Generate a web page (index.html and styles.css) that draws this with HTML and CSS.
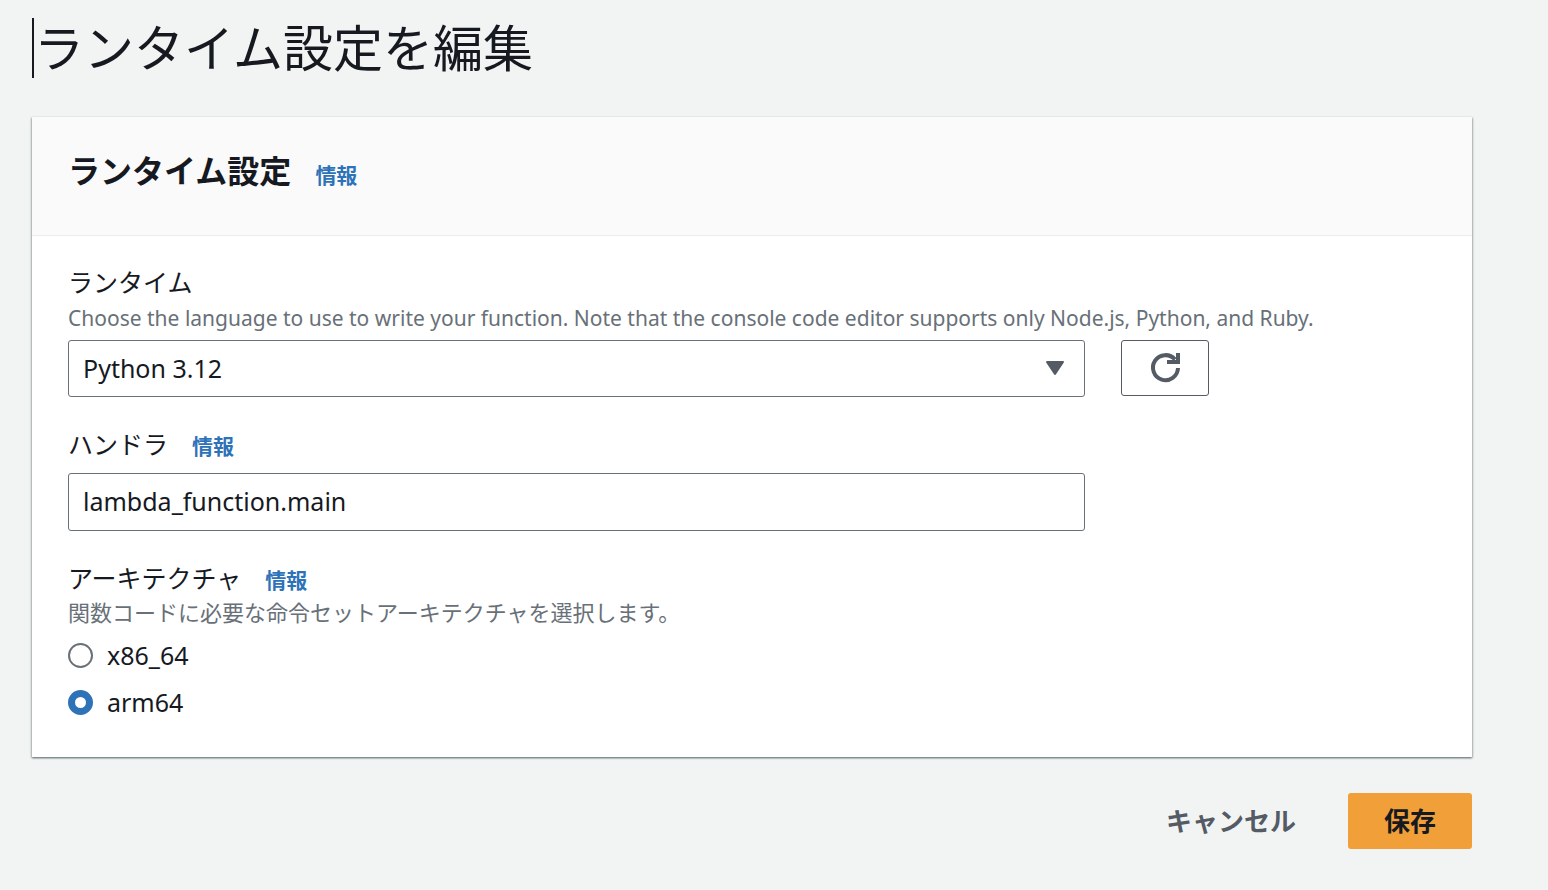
FILE: index.html
```html
<!DOCTYPE html>
<html lang="ja">
<head>
<meta charset="utf-8">
<meta name="viewport" content="width=device-width, initial-scale=1">
<title>ランタイム設定を編集</title>
<link rel="stylesheet" href="styles.css">
</head>
<body>
<main class="page">
  <h1 class="page-title">ランタイム設定を編集</h1>
  <form class="form">
    <section class="card">
      <header class="card-header">
        <h2 class="card-title">ランタイム設定</h2>
        <a class="info" href="#">情報</a>
      </header>
      <div class="card-body">
        <div class="field">
          <div class="label-row"><label class="label" for="runtime">ランタイム</label></div>
          <p class="hint hint-latin">Choose the language to use to write your function. Note that the console code editor supports only Node.js, Python, and Ruby.</p>
          <div class="control-row">
            <div class="select-wrap">
              <select class="control" id="runtime"><option>Python 3.12</option></select>
              <svg class="caret" viewBox="0 0 20 16" aria-hidden="true"><path d="M2 2h16l-8 12z"/></svg>
            </div>
            <button class="refresh" type="button" aria-label="更新">
              <svg viewBox="0 0 32 32" aria-hidden="true"><path d="M29 16A12.5 12.5 0 1 1 26 7.500"/><path d="M29 1V10H18"/></svg>
            </button>
          </div>
        </div>
        <div class="field">
          <div class="label-row"><label class="label" for="handler">ハンドラ</label><a class="info" href="#">情報</a></div>
          <input class="control handler" id="handler" type="text" value="lambda_function.main">
        </div>
        <fieldset class="field">
          <legend class="label-row"><span class="label">アーキテクチャ</span><a class="info" href="#">情報</a></legend>
          <p class="hint">関数コードに必要な命令セットアーキテクチャを選択します。</p>
          <div class="options">
            <label class="option"><input class="radio" type="radio" name="arch">x86_64</label>
            <label class="option"><input class="radio" type="radio" name="arch" checked>arm64</label>
          </div>
        </fieldset>
      </div>
    </section>
    <div class="actions">
      <button class="button" type="button">キャンセル</button>
      <button class="button primary" type="button">保存</button>
    </div>
  </form>
</main>
</body>
</html>
```
FILE: styles.css
```css
* { box-sizing: border-box; }
body {
  margin: 0;
  background: #f2f4f3;
  color: #16191f;
  font-family: "Noto Sans", "Noto Sans CJK JP", sans-serif;
  font-size: 25px;
}
h1, h2, p, fieldset, legend { margin: 0; padding: 0; border: 0; }
.page { padding: 18px 76px 40px 32px; }
.page-title {
  border-left: 2px solid #16191f;
  font-size: 50px;
  line-height: 60px;
  font-weight: 400;
}
.card {
  margin-top: 39px;
  background: #fff;
  box-shadow: 0 1px 2px rgba(0, 28, 36, 0.5), 1px 1px 2px rgba(0, 28, 36, 0.15), -1px 1px 2px rgba(0, 28, 36, 0.15);
}
.card-header {
  display: flex;
  align-items: baseline;
  gap: 24px;
  padding: 32px 36px 42px;
  background: #fafafa;
  border-bottom: 1px solid #eaeded;
}
.card-title { font-size: 32px; line-height: 44px; font-weight: 700; }
.info { color: #2e72b8; font-size: 21px; font-weight: 700; line-height: 32px; text-decoration: none; }
.card-body { display: grid; gap: 31px; padding: 30px 36px 37px; }
.field { min-width: 0; }
.label { line-height: 32px; }
.label-row { display: flex; align-items: baseline; gap: 24px; height: 32px; }
.hint { margin-top: 2px; color: #687078; font-size: 22px; line-height: 32px; }
.hint-latin { margin-top: 4px; font-size: 21px; }
.control-row { display: grid; grid-template-columns: minmax(0, 1017px) 88px; gap: 36px; margin-top: 6px; }
.select-wrap { position: relative; }
.control {
  display: block;
  width: 100%;
  max-width: 1017px;
  height: 57px;
  padding: 0 14px 2px;
  border: 1px solid #687078;
  border-radius: 3px;
  background: #fff;
  color: #16191f;
  font: inherit;
  appearance: none;
}
.handler { height: 58px; margin-top: 13px; }
.caret {
  position: absolute;
  right: 20px;
  top: 20px;
  width: 20px;
  height: 16px;
  fill: #545b64;
  stroke: #545b64;
  stroke-width: 2;
  stroke-linejoin: round;
}
.refresh {
  display: grid;
  place-items: center;
  height: 56px;
  padding: 0;
  border: 1px solid #545b64;
  border-radius: 3px;
  background: #fff;
}
.refresh svg { width: 32px; height: 32px; fill: none; stroke: #545b64; stroke-width: 4; }
.options { display: grid; gap: 11px; margin-top: 9px; }
.option { display: flex; align-items: center; gap: 14px; line-height: 36px; }
.radio {
  width: 25px;
  height: 25px;
  margin: 0;
  border: 2px solid #687078;
  border-radius: 50%;
  background: #fff;
  appearance: none;
}
.radio:checked { border: 7px solid #2e72b8; }
.actions { display: flex; justify-content: flex-end; gap: 16px; margin-top: 36px; }
.button {
  height: 56px;
  padding: 0 36px 2px;
  border: 0;
  border-radius: 3px;
  background: transparent;
  color: #545b64;
  font: inherit;
  font-size: 26px;
  font-weight: 700;
}
.primary { background: #f19f39; color: #16191f; }
```
